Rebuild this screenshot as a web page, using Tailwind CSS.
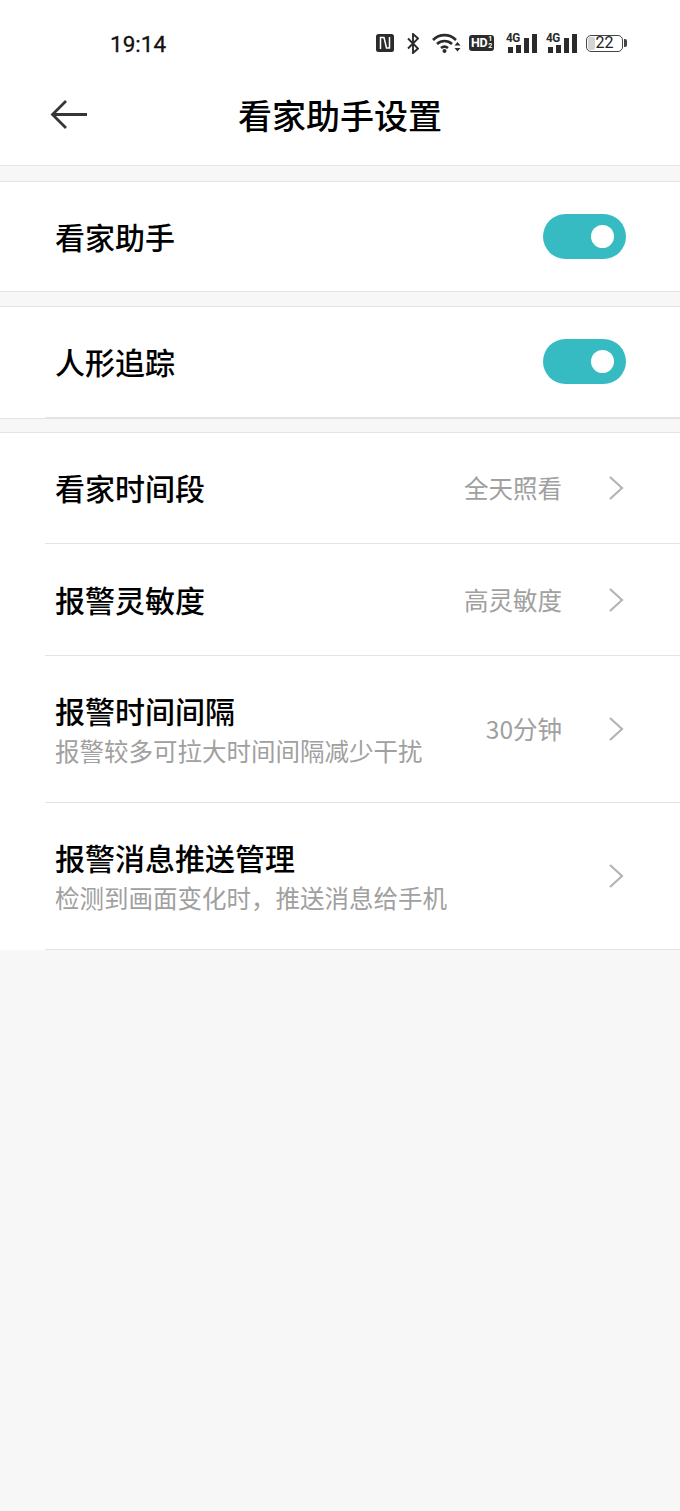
<!DOCTYPE html>
<html lang="zh-CN">
<head>
<meta charset="utf-8">
<script src="https://cdn.jsdelivr.net/npm/@tailwindcss/browser@4"></script>
</head>
<body class="m-0 bg-[#f7f7f7] font-['Noto_Sans_CJK_SC','Noto_Sans',sans-serif] text-black">
<div class="w-[680px] h-[1511px] overflow-hidden">
  <!-- header -->
  <div class="h-[166px] bg-white border-b border-[#e8e8e8]">
    <div class="h-[88px] pt-[32px] pl-[110px] pr-[53px] flex items-start justify-between">
      <span class="text-[22.500px] leading-[24px] font-normal font-['Roboto',sans-serif] text-[#111] [-webkit-text-stroke:0.3px_#111]">19:14</span>
      <div class="flex items-center h-[22px]">
        <svg width="18" height="18" viewBox="0 0 18 18" class="mr-[13px]"><rect width="18" height="18" rx="2.500" fill="#2b2b2b"/><path d="M4.500 15V3.500h3.500L10.500 14h3V3" fill="none" stroke="#fff" stroke-width="1.500"/></svg>
        <svg width="12" height="21" viewBox="0 0 12 21" class="mr-[13px]"><path d="M1 5.500l10 10-5 4.500V1l5 4.500-10 10" fill="none" stroke="#2b2b2b" stroke-width="1.900"/></svg>
        <svg width="29" height="20" viewBox="0 0 29 20" class="mr-[8px]"><g fill="none" stroke="#2b2b2b" stroke-width="2.600"><path d="M1 7C7.500 0.500 17.500 0.500 24 7"/><path d="M5 11c4.500-4 10.500-4 15 0"/><path d="M9 15c2.500-2 4.500-2 7 0"/></g><circle cx="12.500" cy="18" r="2" fill="#2b2b2b"/><path d="M22.500 12.500l3-3.500 3 3.500zM22.500 15l3 3.500 3-3.500z" fill="#2b2b2b"/></svg>
        <div class="w-[25px] h-[16px] rounded-[3px] bg-[#2b2b2b] text-white flex items-center pl-[2px] mr-[13px]">
          <span class="text-[12.500px] leading-[16px] font-bold font-['Roboto',sans-serif] tracking-[-0.3px]">HD</span>
          <span class="flex flex-col text-[7px] leading-[7px] font-bold font-['Roboto',sans-serif] ml-[1px]"><span>1</span><span>2</span></span>
        </div>
        <div class="relative w-[28px] h-[20px] mr-[12px]">
          <span class="absolute left-[-1px] top-[-1px] text-[13px] leading-[12px] font-bold font-['Roboto',sans-serif] text-[#2b2b2b] tracking-[-0.5px] [transform:scaleX(0.9)] origin-left">4G</span>
          <div class="absolute left-[1px] bottom-0 flex items-end gap-[3px]"><i class="block w-[5px] h-[6px] bg-[#2b2b2b]"></i><i class="block w-[5px] h-[8px] bg-[#2b2b2b]"></i><i class="block w-[5px] h-[15px] bg-[#2b2b2b]"></i><i class="block w-[5px] h-[19px] bg-[#2b2b2b]"></i></div>
        </div>
        <div class="relative w-[28px] h-[20px] mr-[11px]">
          <span class="absolute left-[-1px] top-[-1px] text-[13px] leading-[12px] font-bold font-['Roboto',sans-serif] text-[#2b2b2b] tracking-[-0.5px] [transform:scaleX(0.9)] origin-left">4G</span>
          <div class="absolute left-[1px] bottom-0 flex items-end gap-[3px]"><i class="block w-[5px] h-[6px] bg-[#2b2b2b]"></i><i class="block w-[5px] h-[8px] bg-[#2b2b2b]"></i><i class="block w-[5px] h-[15px] bg-[#2b2b2b]"></i><i class="block w-[5px] h-[19px] bg-[#2b2b2b]"></i></div>
        </div>
        <div class="relative w-[37px] h-[17px] rounded-[5px] border-[1.500px] border-[#444] pl-[8.500px] text-[16px] leading-[14px] font-['Roboto',sans-serif] text-[#222]">
          <div class="absolute left-[1px] top-[1px] bottom-[1px] w-[7px] bg-[#d4d4d4] rounded-[2px]"></div>
          <span class="relative">22</span>
        </div>
        <div class="w-[3px] h-[8px] bg-[#444] ml-[1px] rounded-r-[2px]"></div>
      </div>
    </div>
    <div class="h-[77px] relative flex justify-center">
      <svg width="38" height="30" viewBox="0 0 38 30" class="absolute left-[50px] top-[12px]"><path d="M37 14.500H3M16 1L2.500 14.500 16 28" fill="none" stroke="#363636" stroke-width="2.800"/></svg>
      <h1 class="text-[34px] leading-[46px] font-medium mt-[4px]">看家助手设置</h1>
    </div>
  </div>

  <div class="h-[15px]"></div>

  <!-- toggles -->
  <div class="h-[111px] bg-white border-y border-[#e3e3e3] flex items-center justify-between pl-[55px] pr-[54px]">
    <span class="text-[30px] leading-[40px] font-medium mt-[-2px]">看家助手</span>
    <div class="w-[83px] h-[45px] rounded-full bg-[#36bbc2] flex items-center justify-end pr-[12px] mt-[-1px]"><div class="w-[23px] h-[23px] rounded-full bg-white"></div></div>
  </div>
  <div class="h-[14px]"></div>
  <div class="h-[112px] bg-white border-t border-[#e3e3e3] flex flex-col">
    <div class="flex-1 flex items-center justify-between pl-[55px] pr-[54px]">
      <span class="text-[30px] leading-[40px] font-medium mt-[-2px]">人形追踪</span>
      <div class="w-[83px] h-[45px] rounded-full bg-[#36bbc2] flex items-center justify-end pr-[12px] mt-[-2px]"><div class="w-[23px] h-[23px] rounded-full bg-white"></div></div>
    </div>
    <div class="ml-[45px] h-px bg-[#e3e3e3]"></div>
  </div>
  <div class="h-[14px] border-t border-[#e3e3e3]"></div>

  <!-- list -->
  <div class="h-[518px] bg-white border-t border-[#e3e3e3]">
    <div class="h-[111px] ml-[45px] border-b border-[#e3e3e3] flex items-center pl-[10px] pr-[56px]">
      <span class="text-[30px] leading-[40px] font-medium flex-1 mt-[-2px]">看家时间段</span>
      <span class="text-[24.500px] leading-[34px] text-[#a0a0a0] mr-[46px]">全天照看</span>
      <svg width="16" height="24" viewBox="0 0 16 24"><path d="M2 1l12 11L2 23" fill="none" stroke="#b4b4b4" stroke-width="2.200"/></svg>
    </div>
    <div class="h-[112px] ml-[45px] border-b border-[#e3e3e3] flex items-center pl-[10px] pr-[56px]">
      <span class="text-[30px] leading-[40px] font-medium flex-1 mt-[-2px]">报警灵敏度</span>
      <span class="text-[24.500px] leading-[34px] text-[#a0a0a0] mr-[46px]">高灵敏度</span>
      <svg width="16" height="24" viewBox="0 0 16 24"><path d="M2 1l12 11L2 23" fill="none" stroke="#b4b4b4" stroke-width="2.200"/></svg>
    </div>
    <div class="h-[147px] ml-[45px] border-b border-[#e3e3e3] flex items-center pl-[10px] pr-[56px]">
      <div class="flex-1">
        <div class="text-[30px] leading-[40px] font-medium">报警时间间隔</div>
        <div class="text-[24.500px] leading-[34px] text-[#a0a0a0] mt-[4px]">报警较多可拉大时间间隔减少干扰</div>
      </div>
      <span class="text-[24.500px] leading-[34px] text-[#a0a0a0] mr-[46px]">30分钟</span>
      <svg width="16" height="24" viewBox="0 0 16 24"><path d="M2 1l12 11L2 23" fill="none" stroke="#b4b4b4" stroke-width="2.200"/></svg>
    </div>
    <div class="h-[147px] ml-[45px] border-b border-[#e3e3e3] flex items-center pl-[10px] pr-[56px]">
      <div class="flex-1">
        <div class="text-[30px] leading-[40px] font-medium">报警消息推送管理</div>
        <div class="text-[24.500px] leading-[34px] text-[#a0a0a0] mt-[4px]">检测到画面变化时，推送消息给手机</div>
      </div>
      <svg width="16" height="24" viewBox="0 0 16 24"><path d="M2 1l12 11L2 23" fill="none" stroke="#b4b4b4" stroke-width="2.200"/></svg>
    </div>
  </div>
</div>
</body>
</html>
